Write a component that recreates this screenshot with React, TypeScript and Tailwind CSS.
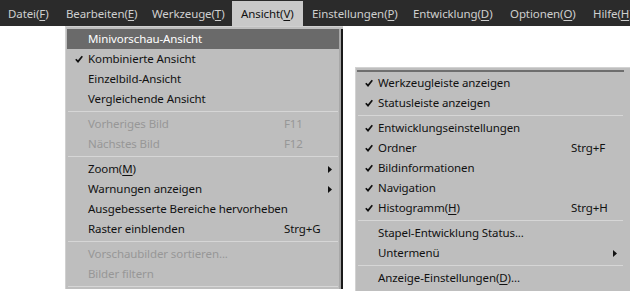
import React from "react";

type Item =
  | { sep: true }
  | {
      sep?: false;
      label: React.ReactNode;
      check?: boolean;
      shortcut?: string;
      sub?: boolean;
      disabled?: boolean;
      active?: boolean;
    };

const mainMenu = [
  { name: "Datei", k: "F", w: "w-[57px] pl-[8px]" },
  { name: "Bearbeiten", k: "E", w: "w-[86px] pl-[9px]" },
  { name: "Werkzeuge", k: "T", w: "w-[89px] pl-[9px]" },
  { name: "Ansicht", k: "V", w: "w-[71px] pl-[9px]" },
  { name: "Einstellungen", k: "P", w: "w-[101px] pl-[9px]" },
  { name: "Entwicklung", k: "D", w: "w-[97px] pl-[9px]" },
  { name: "Optionen", k: "O", w: "w-[83px] pl-[9px]" },
  { name: "Hilfe", k: "H", w: "w-[60px] pl-[9px]" },
];

const Mn = ({ k }: { k: string }) => (
  <>
    (<span className="underline underline-offset-2">{k}</span>)
  </>
);

const leftItems: Item[] = [
  { label: "Minivorschau-Ansicht", active: true },
  { label: "Kombinierte Ansicht", check: true },
  { label: "Einzelbild-Ansicht" },
  { label: "Vergleichende Ansicht" },
  { sep: true },
  { label: "Vorheriges Bild", shortcut: "F11", disabled: true },
  { label: "Nächstes Bild", shortcut: "F12", disabled: true },
  { sep: true },
  { label: <>Zoom<Mn k="M" /></>, sub: true },
  { label: "Warnungen anzeigen", sub: true },
  { label: "Ausgebesserte Bereiche hervorheben" },
  { label: "Raster einblenden", shortcut: "Strg+G" },
  { sep: true },
  { label: "Vorschaubilder sortieren...", disabled: true },
  { label: "Bilder filtern", disabled: true },
  { sep: true },
];

const rightItems: Item[] = [
  { label: "Werkzeugleiste anzeigen", check: true },
  { label: "Statusleiste anzeigen", check: true },
  { sep: true },
  { label: "Entwicklungseinstellungen", check: true },
  { label: "Ordner", check: true, shortcut: "Strg+F" },
  { label: "Bildinformationen", check: true },
  { label: "Navigation", check: true },
  { label: <>Histogramm<Mn k="H" /></>, check: true, shortcut: "Strg+H" },
  { sep: true },
  { label: "Stapel-Entwicklung Status..." },
  { label: "Untermenü", sub: true },
  { sep: true },
  { label: <>Anzeige-Einstellungen<Mn k="D" />...</> },
];

function Check() {
  return (
    <svg width="8" height="8" viewBox="0 0 8 8">
      <path d="M0.8 4.2 L3 6.6 L7.3 1.2" fill="none" stroke="#111" strokeWidth="1.7" />
    </svg>
  );
}

function Arrow() {
  return (
    <svg width="4" height="7" viewBox="0 0 4 7">
      <path d="M0 0 L4 3.5 L0 7 Z" fill="#111" />
    </svg>
  );
}

function Menu({ items, shortcutX, width }: { items: Item[]; shortcutX: number; width: number }) {
  return (
    <div className="flex flex-col" style={{ width }}>
      {items.map((it, i) =>
        it.sep ? (
          <div key={i} className="h-[5px] flex items-center px-[1px]">
            <div className="h-[1px] w-full bg-[#7a7a7a] border-b border-[#d6d6d6]" />
          </div>
        ) : (
          <div
            key={i}
            className={
              "h-[20px] flex items-center relative " +
              (it.active ? "bg-[#6a6a6a] text-white" : it.disabled ? "text-[#979797]" : "text-[#111]")
            }
          >
            <div className="w-[21px] flex justify-center pl-[2px]">{it.check && <Check />}</div>
            <div className="whitespace-nowrap">{it.label}</div>
            {it.shortcut && (
              <div className="absolute top-0 h-full flex items-center" style={{ left: shortcutX }}>
                {it.shortcut}
              </div>
            )}
            {it.sub && (
              <div className="absolute right-[7px] top-0 h-full flex items-center">
                <Arrow />
              </div>
            )}
          </div>
        )
      )}
    </div>
  );
}

export default function App() {
  return (
    <div
      className="relative w-[630px] h-[291px] bg-white overflow-hidden text-[11.5px] tracking-[-0.1px]"
      style={{ fontFamily: '"Noto Sans", sans-serif' }}
    >
      <div className="h-[26px] bg-[#2b2b2b] flex items-stretch">
        {mainMenu.map((m) => (
          <div
            key={m.name}
            className={
              "flex items-center shrink-0 whitespace-nowrap mt-[1px] " +
              m.w +
              " " +
              (m.name === "Ansicht" ? "bg-[#c9c9c9] text-[#111]" : "text-[#cfcfcf]")
            }
          >
            {m.name}
            <Mn k={m.k} />
          </div>
        ))}
      </div>

      {/* Ansicht dropdown */}
      <div className="absolute left-[65px] top-[26px] bg-[#bebebe] border-l border-t border-[#d0d0d0] pt-[2px] pl-[1px] flex">
        <Menu items={leftItems} shortcutX={217} width={272} />
        <div className="w-[2px] bg-[#a8a8a8]" />
        <div className="w-[2px] bg-[#1a1a1a]" />
      </div>

      {/* Untermenü */}
      <div className="absolute left-[355px] top-[67px] w-[275px] h-[224px] bg-[#bebebe] border-l border-t border-[#d2d2d2] pl-[1px] pr-[6px]">
        <div className="h-[5px] flex items-center">
          <div className="h-[2px] w-full bg-[#6e6e6e]" />
        </div>
        <Menu items={rightItems} shortcutX={214} width={267} />
      </div>
    </div>
  );
}
